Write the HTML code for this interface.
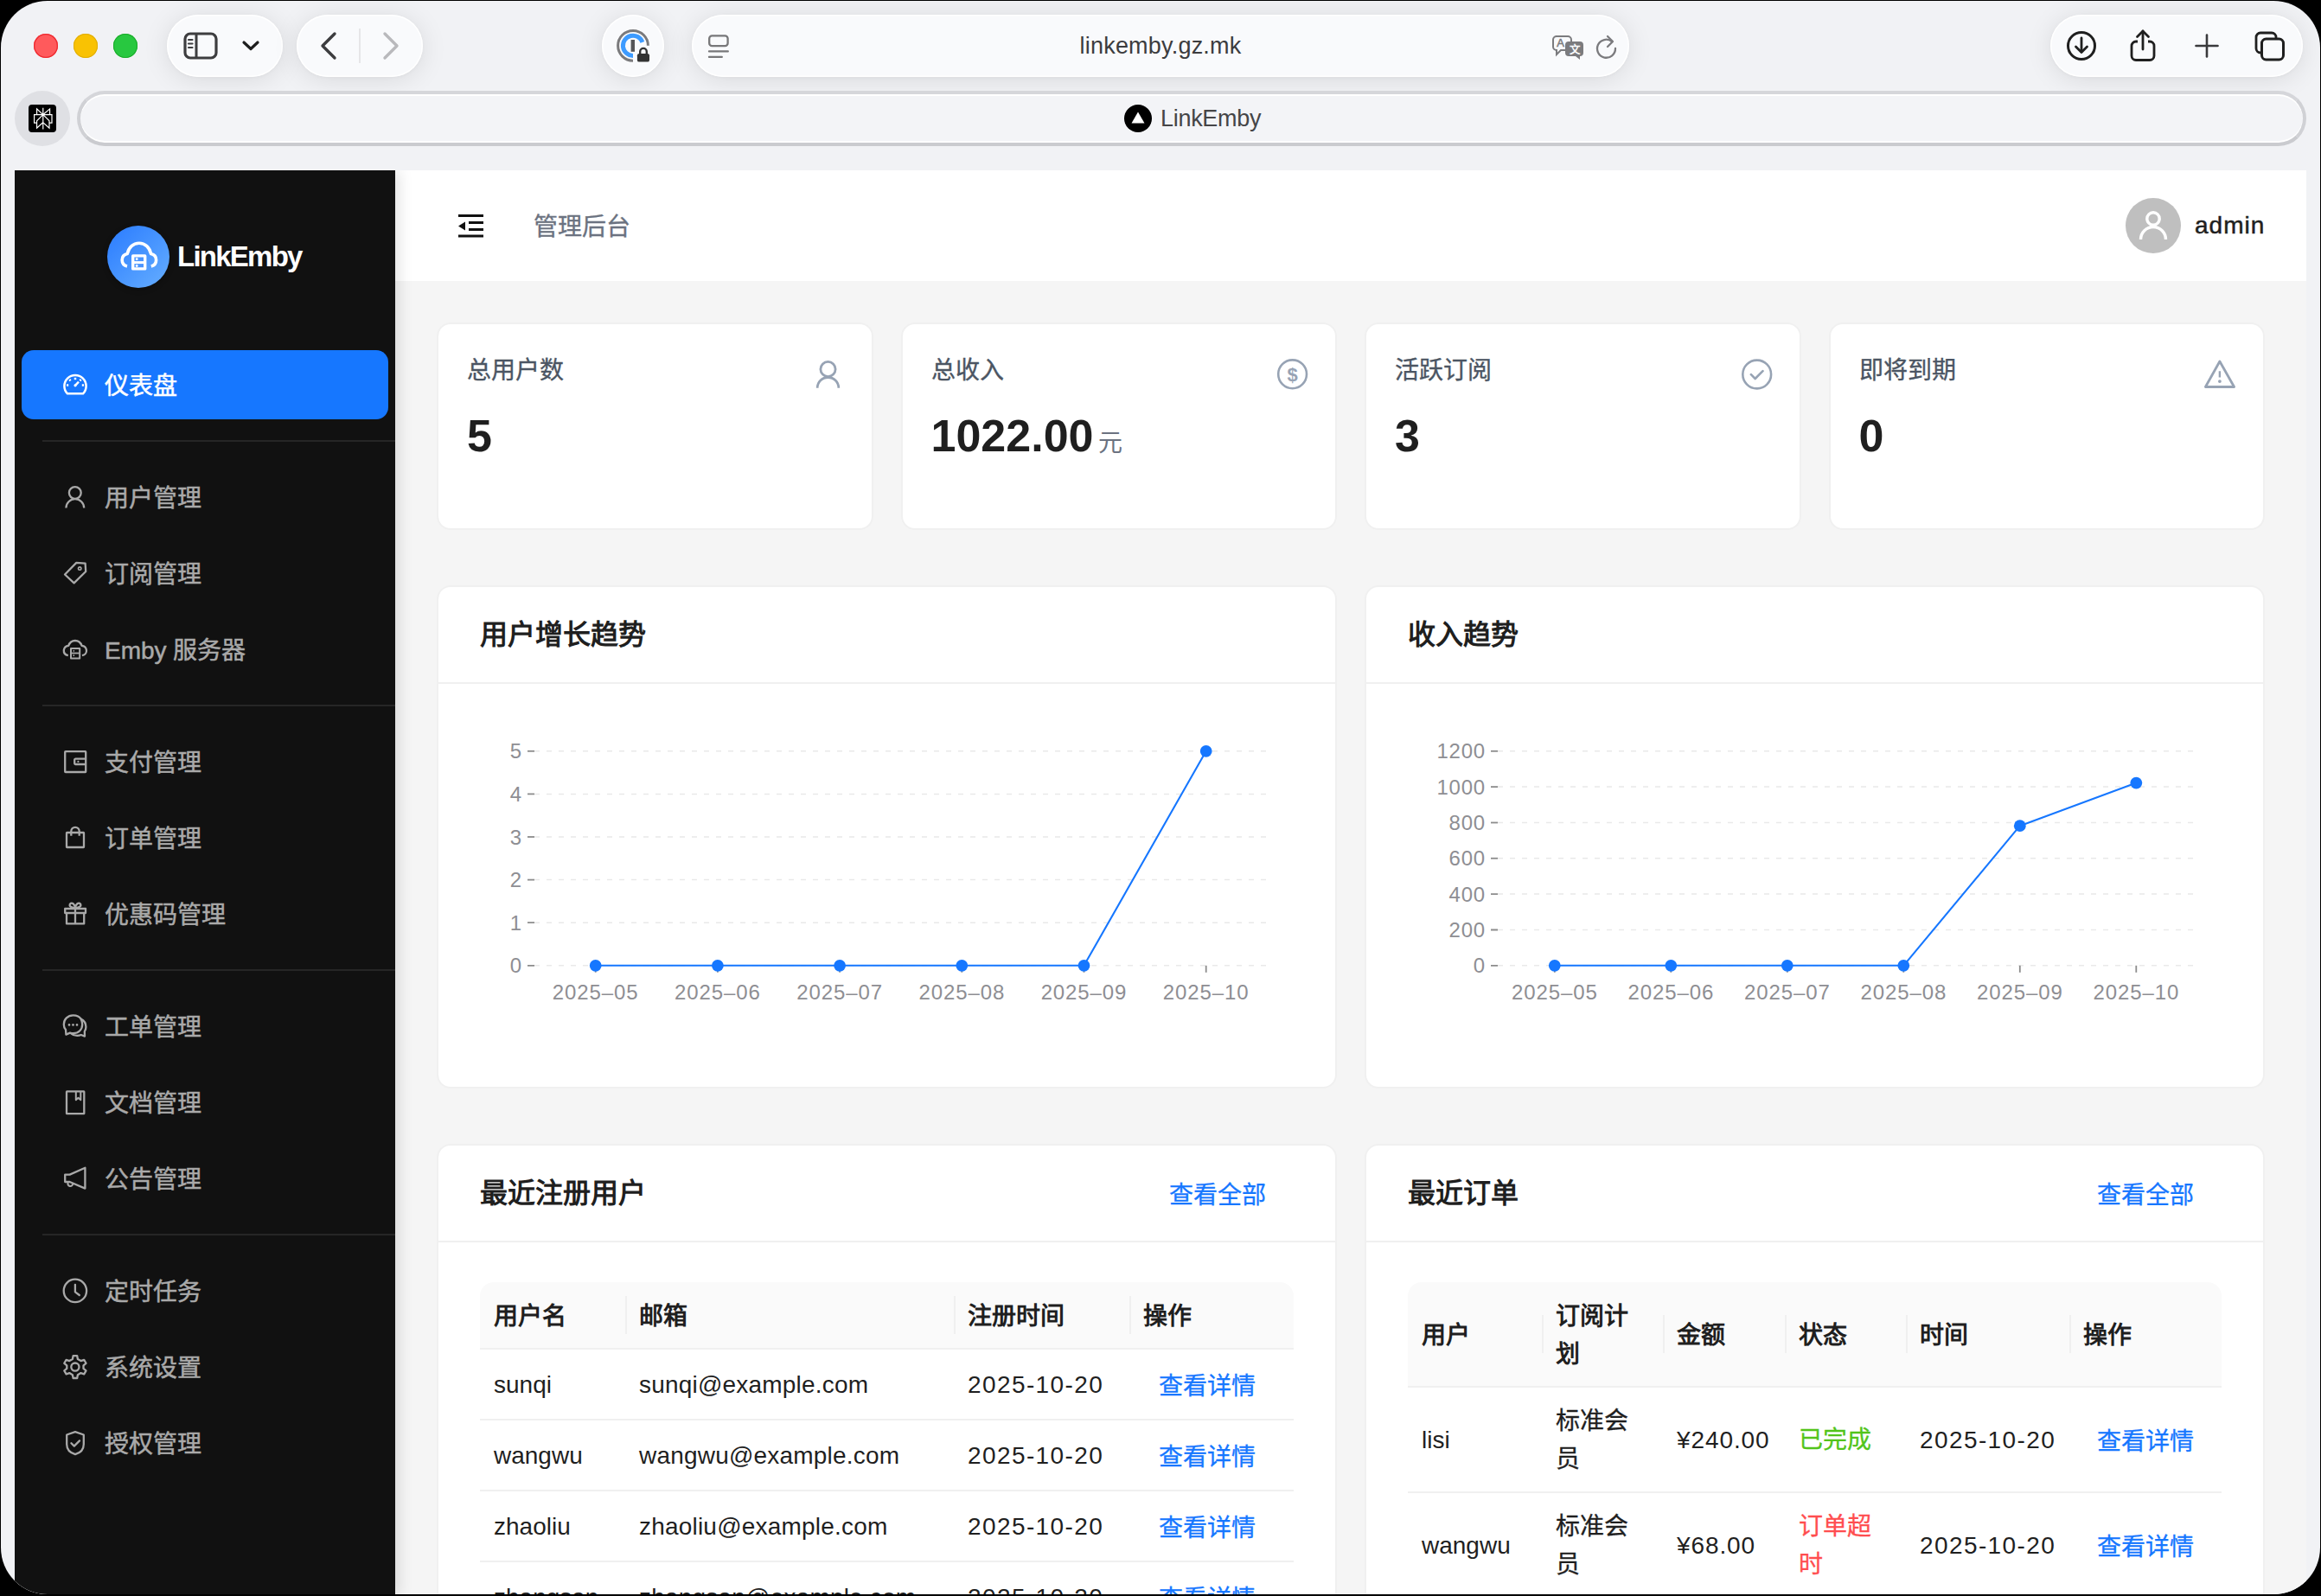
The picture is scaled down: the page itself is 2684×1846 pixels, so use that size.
<!DOCTYPE html>
<html lang="zh-CN">
<head>
<meta charset="utf-8">
<style>
*{box-sizing:border-box;margin:0;padding:0}
html,body{width:2684px;height:1846px;overflow:hidden;background:#000;font-family:"Liberation Sans",sans-serif;}
.abs{position:absolute}
#win{position:absolute;left:0;top:0;width:2684px;height:1846px;background:#f1f2f5;clip-path:inset(1px 1px 2px 1px round 54px);}
.pill{position:absolute;top:17px;height:72px;border-radius:36px;background:#f9fafc;box-shadow:0 3px 30px rgba(0,0,0,0.10),0 1px 4px rgba(0,0,0,0.03),inset 0 0 0 1.5px rgba(255,255,255,0.95);}
.tl{position:absolute;top:39px;width:28px;height:28px;border-radius:50%}
#tabbar{position:absolute;left:89px;top:105px;width:2578px;height:64px;border-radius:32px;border:4px solid #d0d1d5;border-top-color:#d5d6da;border-bottom-color:#cacbcf;background:#f3f4f7;box-shadow:inset 0 2px 0 #fff,inset 0 -2px 0 #fff;}
#web{position:absolute;left:17px;top:197px;width:2650px;height:1649px;background:#f5f5f5;overflow:hidden}
#side{position:absolute;left:0;top:0;width:440px;height:1649px;background:#111111;box-shadow:4px 0 16px rgba(0,0,0,0.12);z-index:2}
#hdr{position:absolute;left:440px;top:0;width:2210px;height:128px;background:#fff;z-index:1}
.mi{position:absolute;left:8px;width:424px;height:80px;color:#a9a9a9;font-size:28px;line-height:80px;}
.mi .ic{position:absolute;left:56px;top:26px;width:28px;height:28px}
.mi span{position:absolute;left:104px;top:0}
.mt{height:80px;line-height:84px;font-size:28px;color:#a9a9a9;white-space:nowrap;-webkit-text-stroke:0.5px currentColor}

.card{position:absolute;background:#fff;border:2px solid #f0f0f0;border-radius:16px;overflow:hidden}
.st-title{position:absolute;left:33px;top:32px;-webkit-text-stroke:0.35px currentColor;height:44px;line-height:44px;font-size:28px;color:#4b5563;white-space:nowrap}
.st-val{position:absolute;left:33px;top:97px;height:64px;line-height:64px;font-size:52px;font-weight:bold;color:#1f1f1f;white-space:nowrap}
.st-ic{position:absolute;top:38px;width:40px;height:40px}
.ch-title{position:absolute;left:48px;top:33px;height:44px;line-height:44px;font-size:32px;font-weight:bold;color:#1f1f1f;white-space:nowrap}
.ch-div{position:absolute;left:0;right:0;top:110px;height:2px;background:#f0f0f0}
.more{position:absolute;top:36px;-webkit-text-stroke:0.3px currentColor;height:44px;line-height:44px;font-size:28px;color:#1677ff;white-space:nowrap}
.tbl{position:absolute;left:48px;top:158px;width:941px}
.th{position:absolute;top:0;background:#fafafa;}
.cell{position:absolute;font-size:28px;line-height:44px;color:#1f1f1f;white-space:nowrap}
.hd{font-weight:bold}
.sep{position:absolute;width:2px;height:44px;background:#f0f0f0}
.rowb{position:absolute;left:0;width:941px;height:2px;background:#f0f0f0}
.link{color:#1677ff;-webkit-text-stroke:0.3px currentColor}
.num{letter-spacing:1.4px}
.num2{letter-spacing:0.9px}
.lat{letter-spacing:0.2px}
.div{position:absolute;left:32px;width:408px;height:2px;background:#262626}
</style>
</head>
<body>
<div id="win">
  <!-- traffic lights -->
  <div class="tl" style="left:39px;background:#ff5a5c;box-shadow:inset 0 0 0 1.3px #ee2a30"></div>
  <div class="tl" style="left:85px;background:#f9c203;box-shadow:inset 0 0 0 1px #e0ad00"></div>
  <div class="tl" style="left:131px;background:#28c840;box-shadow:inset 0 0 0 1px #1aab29"></div>
  <!-- pill 1 -->
  <div class="pill" style="left:193px;width:134px">
    <svg class="abs" style="left:18px;top:19px" width="42" height="34" viewBox="0 0 42 34">
      <rect x="3" y="3" width="36" height="28" rx="6" fill="none" stroke="#3d3d3f" stroke-width="3.2"/>
      <line x1="16" y1="4" x2="16" y2="30" stroke="#3d3d3f" stroke-width="3"/>
      <line x1="7" y1="10" x2="11.5" y2="10" stroke="#3d3d3f" stroke-width="2.2" stroke-linecap="round"/>
      <line x1="7" y1="14.5" x2="11.5" y2="14.5" stroke="#3d3d3f" stroke-width="2.2" stroke-linecap="round"/>
      <line x1="7" y1="19" x2="11.5" y2="19" stroke="#3d3d3f" stroke-width="2.2" stroke-linecap="round"/>
    </svg>
    <svg class="abs" style="left:86px;top:29px" width="22" height="14" viewBox="0 0 22 14">
      <polyline points="3,3 11,10.5 19,3" fill="none" stroke="#1e1e1e" stroke-width="3.2" stroke-linecap="round" stroke-linejoin="round"/>
    </svg>
  </div>
  <!-- pill 2 -->
  <div class="pill" style="left:343px;width:146px">
    <svg class="abs" style="left:25px;top:19px" width="24" height="34" viewBox="0 0 24 34">
      <polyline points="19,3 5,17 19,31" fill="none" stroke="#3d3d3f" stroke-width="3.4" stroke-linecap="round" stroke-linejoin="round"/>
    </svg>
    <div class="abs" style="left:72px;top:16px;width:2px;height:40px;background:#e6e6e8"></div>
    <svg class="abs" style="left:97px;top:19px" width="24" height="34" viewBox="0 0 24 34">
      <polyline points="5,3 19,17 5,31" fill="none" stroke="#b9b9bc" stroke-width="3.4" stroke-linecap="round" stroke-linejoin="round"/>
    </svg>
  </div>
  <!-- 1password -->
  <div class="pill" style="left:696px;width:72px">
    <svg class="abs" style="left:0;top:0" width="72" height="72" viewBox="0 0 72 72">
      <path d="M36 53.2 A17.4 17.4 0 1 1 53.4 35.8" fill="none" stroke="#7a7a7c" stroke-width="3"/>
      <path d="M36 47.4 A11.6 11.6 0 1 1 46.9 31.8" fill="none" stroke="#3d9bff" stroke-width="5"/>
      <rect x="33.6" y="29" width="4.4" height="13.8" fill="#555557"/>
      <path d="M37.5 45 H58 V58 H37.5 Z" fill="#f9fafc"/>
      <rect x="40.9" y="45" width="14.1" height="9.6" rx="2.2" fill="#333"/>
      <path d="M44.2 45.5 v-2.8 a3.8 3.8 0 0 1 7.6 0 v2.8" fill="none" stroke="#333" stroke-width="2.4"/>
    </svg>
  </div>
  <!-- address -->
  <div class="pill" style="left:800px;width:1084px">
    <svg class="abs" style="left:18px;top:22px" width="26" height="30" viewBox="0 0 26 30">
      <rect x="2.2" y="2.4" width="21.4" height="11.8" rx="3.2" fill="none" stroke="#777779" stroke-width="2.3"/>
      <line x1="2" y1="20.4" x2="23.8" y2="20.4" stroke="#777779" stroke-width="2.3" stroke-linecap="round"/>
      <line x1="2" y1="26.9" x2="16.8" y2="26.9" stroke="#777779" stroke-width="2.3" stroke-linecap="round"/>
    </svg>
    <div class="abs" style="left:0;width:1084px;top:0;height:72px;line-height:72px;text-align:center;font-size:27px;color:#3c3c3e;letter-spacing:0.2px">linkemby.gz.mk</div>
    <svg class="abs" style="left:994px;top:23px" width="40" height="30" viewBox="0 0 40 30">
      <path d="M5 2 h14 a4 4 0 0 1 4 4 v8 a4 4 0 0 1 -4 4 h-8 l-5 5 v-5 a4 4 0 0 1 -4 -4 v-8 a4 4 0 0 1 4 -4z" fill="none" stroke="#7b7b7e" stroke-width="2"/>
      <text x="6.2" y="14.2" font-size="13" fill="#7b7b7e" font-family="Liberation Sans" stroke="#7b7b7e" stroke-width="0.5">A</text>
      <path d="M20 8 h13 a4 4 0 0 1 4 4 v9 a4 4 0 0 1 -4 4 l0 4 l-5 -4 h-8 a4 4 0 0 1 -4 -4 v-9 a4 4 0 0 1 4 -4z" fill="#7b7b7e"/>
      <text x="27.5" y="21.8" text-anchor="middle" font-size="12.5" font-weight="bold" fill="#f9fafc">文</text>
    </svg>
    <svg class="abs" style="left:1044px;top:22px" width="28" height="30" viewBox="0 0 28 30">
      <path d="M20 9 A10.5 10.5 0 1 0 24 17" fill="none" stroke="#7b7b7e" stroke-width="2.3" stroke-linecap="round"/>
      <polyline points="15,3 21,9 15,15" fill="none" stroke="#7b7b7e" stroke-width="2.3" stroke-linecap="round" stroke-linejoin="round"/>
    </svg>
  </div>
  <!-- right pill -->
  <div class="pill" style="left:2371px;width:292px">
    <svg class="abs" style="left:17px;top:17px" width="38" height="38" viewBox="0 0 38 38">
      <circle cx="19" cy="19" r="15.5" fill="none" stroke="#1f1f1f" stroke-width="3"/>
      <line x1="19" y1="10" x2="19" y2="26" stroke="#1f1f1f" stroke-width="2.8" stroke-linecap="round"/>
      <polyline points="12.5,20 19,26.5 25.5,20" fill="none" stroke="#1f1f1f" stroke-width="2.8" stroke-linecap="round" stroke-linejoin="round"/>
    </svg>
    <svg class="abs" style="left:90px;top:16px" width="34" height="40" viewBox="0 0 34 40">
      <path d="M11 15 h-2 a5 5 0 0 0 -5 5 v11.5 a5 5 0 0 0 5 5 h16 a5 5 0 0 0 5 -5 v-11.5 a5 5 0 0 0 -5 -5 h-2" fill="none" stroke="#1f1f1f" stroke-width="2.8"/>
      <line x1="17" y1="3" x2="17" y2="24" stroke="#1f1f1f" stroke-width="2.8" stroke-linecap="round"/>
      <polyline points="10.5,9.5 17,3 23.5,9.5" fill="none" stroke="#1f1f1f" stroke-width="2.8" stroke-linecap="round" stroke-linejoin="round"/>
    </svg>
    <svg class="abs" style="left:165px;top:20px" width="32" height="32" viewBox="0 0 32 32">
      <line x1="16" y1="3.5" x2="16" y2="28.5" stroke="#3a3a3c" stroke-width="2.6" stroke-linecap="round"/>
      <line x1="3.5" y1="16" x2="28.5" y2="16" stroke="#3a3a3c" stroke-width="2.6" stroke-linecap="round"/>
    </svg>
    <svg class="abs" style="left:234px;top:17px" width="40" height="38" viewBox="0 0 40 38">
      <path d="M10 27 h-1 a5 5 0 0 1 -5 -5 v-13 a5 5 0 0 1 5 -5 h13 a5 5 0 0 1 5 5 v1" fill="none" stroke="#1f1f1f" stroke-width="2.8"/>
      <rect x="10.5" y="11" width="25" height="24" rx="5" fill="none" stroke="#1f1f1f" stroke-width="3"/>
    </svg>
  </div>
  <!-- tab row -->
  <div class="abs" style="left:17px;top:105px;width:64px;height:64px;border-radius:50%;background:#dfe0e4"></div>
  <svg class="abs" style="left:33px;top:121px" width="32" height="32" viewBox="0 0 32 32">
    <rect x="0" y="0" width="32" height="32" rx="4" fill="#000"/>
    <path transform="translate(4.3,3.6) scale(1.04)" fill="#fff" d="M22.3977 7.0896h-2.3106V.0676l-7.5094 6.3542V.1577h-1.1554v6.1966L4.4904 0v7.0896H1.6023v10.3976h2.8882V24l6.932-6.3591v6.2005h1.1554v-6.0469l6.9318 6.1807v-6.4879h2.8882V7.0896zm-3.4657-4.531v4.531h-5.355l5.355-4.531zm-13.2862.0676 4.8691 4.4634H5.6458V2.6262zM2.7576 16.332V8.245h7.8476l-6.1149 6.1147v1.9723H2.7576zm2.8882 5.0404v-3.8852h.0001v-2.6488l5.7763-5.7764v7.0111l-5.7764 5.2993zm12.7086.0248-5.7766-5.1509V9.0618l5.7766 5.7766v6.5588zm2.8882-5.0652h-1.733v-1.9723L13.3948 8.245h7.8478v8.087z"/>
  </svg>
  <div id="tabbar">
    <div class="abs" style="left:1207px;top:12px;width:32px;height:32px;border-radius:50%;background:#000"></div>
    <svg class="abs" style="left:1207px;top:12px" width="32" height="32" viewBox="0 0 32 32"><polygon points="16,8.5 23.5,21.5 8.5,21.5" fill="#fff"/></svg>
    <div class="abs" style="left:1249px;top:-1px;height:58px;line-height:58px;font-size:27px;color:#454547;letter-spacing:-0.3px">LinkEmby</div>
  </div>

  <div id="web">
    <div id="side">
      <div class="abs" style="left:107px;top:64px;width:72px;height:72px;border-radius:50%;background:linear-gradient(135deg,#2a7bff 0%,#4a97ff 55%,#66aeff 100%);box-shadow:0 2px 6px rgba(0,0,0,0.3)"></div>
      <svg class="abs" style="left:107px;top:64px" width="72" height="72" viewBox="0 0 72 72" fill="none" stroke="#fff" stroke-width="3.6" stroke-linejoin="round">
        <path d="M23 47 C19 46 17.2 43 17.2 39.8 C17.2 36 19.8 33.4 23.2 32.6 C24.8 25.2 30 20.2 36.9 20.2 C43.8 20.2 49 25.2 50.6 32.6 C54 33.4 56.6 36 56.6 39.8 C56.6 43 54.8 46 50.8 47"/>
        <rect x="29.7" y="34.9" width="14" height="15" stroke-width="3.4" fill="#4a95ff"/>
        <line x1="29.7" y1="42.6" x2="43.7" y2="42.6" stroke-width="3"/>
        <circle cx="34.2" cy="38.7" r="1.4" fill="#fff" stroke="none"/><circle cx="34.2" cy="46.5" r="1.4" fill="#fff" stroke="none"/>
      </svg>
      <div class="abs" style="left:188px;top:70px;height:60px;line-height:60px;font-size:33px;font-weight:bold;color:#fff;letter-spacing:-1.75px">LinkEmby</div>
      <div class="abs" style="left:8px;top:208px;width:424px;height:80px;border-radius:14px;background:#1677ff"></div>
      <div class="abs" style="left:49px;top:227px"><svg width="40" height="40" viewBox="0 0 40 40" fill="none" stroke="#fff" stroke-width="2.5" stroke-linejoin="round"><path d="M12 31.3 A12.6 12.6 0 1 1 30 31.3 Z"/><line x1="21" y1="12.8" x2="21" y2="15.2"/><line x1="14.3" y1="15" x2="15.6" y2="16.3"/><line x1="27.7" y1="15" x2="26.4" y2="16.3"/><line x1="11" y1="21.5" x2="13.2" y2="21.5"/><line x1="28.8" y1="21.5" x2="31" y2="21.5"/><line x1="21" y1="21.8" x2="25" y2="17.6"/><circle cx="21" cy="21.8" r="1.6" fill="#fff" stroke="none"/></svg></div>
      <div class="abs mt" style="left:104px;top:208px;color:#fff">仪表盘</div>
      <div class="abs" style="left:49px;top:358px"><svg width="40" height="40" viewBox="0 0 40 40" fill="none" stroke="#a9a9a9" stroke-width="2.3" stroke-linejoin="round"><circle cx="20.8" cy="15" r="6.9"/><path d="M10.4 32.6 A10.4 10.4 0 0 1 31.2 32.6"/></svg></div>
      <div class="abs mt" style="left:104px;top:338px">用户管理</div>
      <div class="abs" style="left:49px;top:446px"><svg width="40" height="40" viewBox="0 0 40 40" fill="none" stroke="#a9a9a9" stroke-width="2.3" stroke-linejoin="round"><path d="M9 21.5 L22.3 7.9 L32.6 8.6 L33.2 18 L19.6 31.4 Z"/><circle cx="26.2" cy="14.6" r="1.7" stroke-width="1.6"/></svg></div>
      <div class="abs mt" style="left:104px;top:426px">订阅管理</div>
      <div class="abs" style="left:49px;top:534px"><svg width="40" height="40" viewBox="0 0 40 40" fill="none" stroke="#a9a9a9" stroke-width="2.3" stroke-linejoin="round"><path d="M12.8 27.2 C9.2 26.4 7.6 23.6 7.8 21 C8.2 18.1 10.4 16.2 13.2 15.9 C14.6 11.9 17.5 10 20.9 10 C24.3 10 27.2 11.9 28.6 15.9 C31.4 16.2 33.6 18.1 34 21 C34.3 23.6 32.6 26.4 29 27.2"/><rect x="16" y="19" width="10.2" height="11.5" stroke-width="2"/><line x1="16" y1="24.5" x2="26.2" y2="24.5" stroke-width="1.8"/><circle cx="19.3" cy="21.8" r="0.9" fill="#a9a9a9" stroke="none"/><circle cx="19.3" cy="27.2" r="0.9" fill="#a9a9a9" stroke="none"/></svg></div>
      <div class="abs mt" style="left:104px;top:514px">Emby 服务器</div>
      <div class="abs" style="left:49px;top:664px"><svg width="40" height="40" viewBox="0 0 40 40" fill="none" stroke="#a9a9a9" stroke-width="2.3" stroke-linejoin="round"><rect x="9.2" y="8.2" width="24" height="23.8" rx="0.6"/><path d="M33 16.6 H21.4 A1.2 1.2 0 0 0 20.2 17.8 V21.8 A1.2 1.2 0 0 0 21.4 23 H33"/><circle cx="24.4" cy="19.9" r="1.1" fill="#a9a9a9" stroke="none"/></svg></div>
      <div class="abs mt" style="left:104px;top:644px">支付管理</div>
      <div class="abs" style="left:49px;top:752px"><svg width="40" height="40" viewBox="0 0 40 40" fill="none" stroke="#a9a9a9" stroke-width="2.3" stroke-linejoin="round"><rect x="11" y="14" width="20" height="17" rx="0.4"/><path d="M16.3 17.8 V12.5 A4.7 4.7 0 0 1 25.7 12.5 V17.8"/></svg></div>
      <div class="abs mt" style="left:104px;top:732px">订单管理</div>
      <div class="abs" style="left:49px;top:840px"><svg width="40" height="40" viewBox="0 0 40 40" fill="none" stroke="#a9a9a9" stroke-width="2.3" stroke-linejoin="round"><rect x="9.2" y="14" width="23.8" height="5" /><path d="M11 19 V31.4 H31.2 V19"/><line x1="21" y1="13.5" x2="21" y2="31.4"/><path d="M21 13.5 C19.5 13 15 12.8 14.6 10.3 C14.3 8 16.8 6.9 18.6 8.2 C20 9.2 20.8 11 21 13.5 C21.2 11 22 9.2 23.4 8.2 C25.2 6.9 27.7 8 27.4 10.3 C27 12.8 22.5 13 21 13.5"/></svg></div>
      <div class="abs mt" style="left:104px;top:820px">优惠码管理</div>
      <div class="abs" style="left:49px;top:970px"><svg width="40" height="40" viewBox="0 0 40 40" fill="none" stroke="#a9a9a9" stroke-width="2.3" stroke-linejoin="round"><path d="M27.6 11.6 C25.8 8.6 22.6 7.4 18.6 7.4 C12.3 7.4 7.8 11.9 7.8 18 C7.8 20.4 8.6 22.4 10 24 L10.4 29.6 L15 27.6 C16.1 28 17.3 28.2 18.6 28.2 C24.9 28.2 29.2 23.7 29.2 18 C29.2 15.6 28.6 13.4 27.6 11.6"/><path d="M27.6 11.6 C31.2 13.4 33.4 16.9 33.4 20.7 C33.4 22.6 32.8 24.4 31.8 26 L32 31.6 L27.8 30 C26.4 30.6 24.9 30.9 23.2 30.9 C20.4 30.9 18 29.9 16.2 28.3" /><circle cx="14" cy="18.4" r="1.3" fill="#a9a9a9" stroke="none"/><circle cx="18.5" cy="18.4" r="1.3" fill="#a9a9a9" stroke="none"/><circle cx="23" cy="18.4" r="1.3" fill="#a9a9a9" stroke="none"/></svg></div>
      <div class="abs mt" style="left:104px;top:950px">工单管理</div>
      <div class="abs" style="left:49px;top:1058px"><svg width="40" height="40" viewBox="0 0 40 40" fill="none" stroke="#a9a9a9" stroke-width="2.3" stroke-linejoin="round"><rect x="11" y="7.3" width="20.3" height="25.8" rx="0.4"/><path d="M21.8 7.5 V17.3 L24.5 14.8 L27.3 17.3 V7.5" stroke-width="2"/></svg></div>
      <div class="abs mt" style="left:104px;top:1038px">文档管理</div>
      <div class="abs" style="left:49px;top:1146px"><svg width="40" height="40" viewBox="0 0 40 40" fill="none" stroke="#a9a9a9" stroke-width="2.3" stroke-linejoin="round"><path d="M9.2 15.6 H14.6 L32.4 7.8 V31.6 L14.6 24 H9.2 Z"/><path d="M12.8 24.6 A2.9 2.9 0 1 0 18.2 25.8" stroke-width="2.1"/></svg></div>
      <div class="abs mt" style="left:104px;top:1126px">公告管理</div>
      <div class="abs" style="left:49px;top:1276px"><svg width="40" height="40" viewBox="0 0 40 40" fill="none" stroke="#a9a9a9" stroke-width="2.3" stroke-linejoin="round"><circle cx="20.9" cy="19.9" r="13.2"/><path d="M20.9 12.8 V21.3 L25.8 25" stroke-linecap="round"/></svg></div>
      <div class="abs mt" style="left:104px;top:1256px">定时任务</div>
      <div class="abs" style="left:49px;top:1364px"><svg width="40" height="40" viewBox="0 0 40 40" fill="none" stroke="#a9a9a9" stroke-width="2.3" stroke-linejoin="round"><path d="M18.6 7.2 H23.2 L23.9 11 L27.5 13.1 L31.2 11.8 L33.5 15.8 L30.5 18.3 V21.9 L33.5 24.4 L31.2 28.4 L27.5 27.1 L23.9 29.2 L23.2 33 H18.6 L17.9 29.2 L14.3 27.1 L10.6 28.4 L8.3 24.4 L11.3 21.9 V18.3 L8.3 15.8 L10.6 11.8 L14.3 13.1 L17.9 11 Z"/><circle cx="20.9" cy="20.1" r="4.6"/></svg></div>
      <div class="abs mt" style="left:104px;top:1344px">系统设置</div>
      <div class="abs" style="left:49px;top:1452px"><svg width="40" height="40" viewBox="0 0 40 40" fill="none" stroke="#a9a9a9" stroke-width="2.3" stroke-linejoin="round"><path d="M11.2 10.5 L21 7.2 L30.8 10.5 V21.5 C30.8 27.5 26.4 31.6 21 33.2 C15.6 31.6 11.2 27.5 11.2 21.5 Z"/><path d="M16.4 20.2 L19.8 23.6 L26 17.4" stroke-linecap="round"/></svg></div>
      <div class="abs mt" style="left:104px;top:1432px">授权管理</div>
      <div class="div" style="top:312px"></div>
      <div class="div" style="top:618px"></div>
      <div class="div" style="top:924px"></div>
      <div class="div" style="top:1230px"></div>
    </div>
    <div class="card" style="left:488px;top:176px;width:504.5px;height:240px"><div class="st-title">总用户数</div><div class="st-val">5</div><div class="st-ic" style="right:30px"><svg width="40" height="40" viewBox="0 0 40 40" fill="none" stroke="#97a3b4" stroke-width="2.8"><circle cx="19.5" cy="14" r="8.6"/><path d="M7.2 35.8 A12.3 12.3 0 0 1 31.8 35.8"/></svg></div></div>
    <div class="card" style="left:1024.5px;top:176px;width:504.5px;height:240px"><div class="st-title">总收入</div><div class="st-val">1022.00<span style="font-size:28px;font-weight:normal;color:#6b7280;margin-left:6px">元</span></div><div class="st-ic" style="right:30px"><svg width="40" height="40" viewBox="0 0 40 40" fill="none" stroke="#97a3b4" stroke-width="2.6"><circle cx="20.6" cy="19.8" r="16.4"/><text x="20.6" y="27.8" font-weight="bold" text-anchor="middle" font-size="22" font-family="Liberation Sans" fill="#97a3b4" stroke="none">$</text></svg></div></div>
    <div class="card" style="left:1561px;top:176px;width:504.5px;height:240px"><div class="st-title">活跃订阅</div><div class="st-val">3</div><div class="st-ic" style="right:30px"><svg width="40" height="40" viewBox="0 0 40 40" fill="none" stroke="#97a3b4" stroke-width="2.6"><circle cx="20.7" cy="20" r="16.4"/><path d="M13.9 20.2 L18.7 25 L27.5 16.2" stroke-linecap="round" stroke-linejoin="round"/></svg></div></div>
    <div class="card" style="left:2097.5px;top:176px;width:504.5px;height:240px"><div class="st-title">即将到期</div><div class="st-val">0</div><div class="st-ic" style="right:30px"><svg width="40" height="40" viewBox="0 0 40 40" fill="none" stroke="#97a3b4" stroke-width="2.6"><path d="M19.9 5 L36.6 34.5 H3.4 Z" stroke-linejoin="round" stroke-width="2.8"/><line x1="19.9" y1="16.2" x2="19.9" y2="23.4" stroke-width="2.4"/><circle cx="19.9" cy="28.1" r="1.9" fill="#97a3b4" stroke="none"/></svg></div></div>
    <div class="card" style="left:488px;top:480px;width:1041px;height:582px"><div class="ch-title">用户增长趋势</div><div class="ch-div"></div><svg class="abs" style="left:-2px;top:-2px" width="1041" height="582"><line x1="113" y1="439.8" x2="960" y2="439.8" stroke="#e9e9e9" stroke-width="1.5" stroke-dasharray="6 8"/><line x1="105" y1="439.8" x2="113" y2="439.8" stroke="#8c8c8c" stroke-width="1.8"/><text x="99" y="448.3" text-anchor="end" font-size="24" fill="#8e8e93" font-family="Liberation Sans" letter-spacing="0.8">0</text><line x1="113" y1="390.2" x2="960" y2="390.2" stroke="#e9e9e9" stroke-width="1.5" stroke-dasharray="6 8"/><line x1="105" y1="390.2" x2="113" y2="390.2" stroke="#8c8c8c" stroke-width="1.8"/><text x="99" y="398.7" text-anchor="end" font-size="24" fill="#8e8e93" font-family="Liberation Sans" letter-spacing="0.8">1</text><line x1="113" y1="340.6" x2="960" y2="340.6" stroke="#e9e9e9" stroke-width="1.5" stroke-dasharray="6 8"/><line x1="105" y1="340.6" x2="113" y2="340.6" stroke="#8c8c8c" stroke-width="1.8"/><text x="99" y="349.1" text-anchor="end" font-size="24" fill="#8e8e93" font-family="Liberation Sans" letter-spacing="0.8">2</text><line x1="113" y1="291.0" x2="960" y2="291.0" stroke="#e9e9e9" stroke-width="1.5" stroke-dasharray="6 8"/><line x1="105" y1="291.0" x2="113" y2="291.0" stroke="#8c8c8c" stroke-width="1.8"/><text x="99" y="299.5" text-anchor="end" font-size="24" fill="#8e8e93" font-family="Liberation Sans" letter-spacing="0.8">3</text><line x1="113" y1="241.4" x2="960" y2="241.4" stroke="#e9e9e9" stroke-width="1.5" stroke-dasharray="6 8"/><line x1="105" y1="241.4" x2="113" y2="241.4" stroke="#8c8c8c" stroke-width="1.8"/><text x="99" y="249.9" text-anchor="end" font-size="24" fill="#8e8e93" font-family="Liberation Sans" letter-spacing="0.8">4</text><line x1="113" y1="191.8" x2="960" y2="191.8" stroke="#e9e9e9" stroke-width="1.5" stroke-dasharray="6 8"/><line x1="105" y1="191.8" x2="113" y2="191.8" stroke="#8c8c8c" stroke-width="1.8"/><text x="99" y="200.3" text-anchor="end" font-size="24" fill="#8e8e93" font-family="Liberation Sans" letter-spacing="0.8">5</text><line x1="183.7" y1="439.8" x2="183.7" y2="447.8" stroke="#8c8c8c" stroke-width="1.8"/><text x="183.7" y="479" text-anchor="middle" font-size="24" fill="#8e8e93" font-family="Liberation Sans" letter-spacing="0.9">2025–05</text><line x1="324.9" y1="439.8" x2="324.9" y2="447.8" stroke="#8c8c8c" stroke-width="1.8"/><text x="324.9" y="479" text-anchor="middle" font-size="24" fill="#8e8e93" font-family="Liberation Sans" letter-spacing="0.9">2025–06</text><line x1="466.1" y1="439.8" x2="466.1" y2="447.8" stroke="#8c8c8c" stroke-width="1.8"/><text x="466.1" y="479" text-anchor="middle" font-size="24" fill="#8e8e93" font-family="Liberation Sans" letter-spacing="0.9">2025–07</text><line x1="607.3" y1="439.8" x2="607.3" y2="447.8" stroke="#8c8c8c" stroke-width="1.8"/><text x="607.3" y="479" text-anchor="middle" font-size="24" fill="#8e8e93" font-family="Liberation Sans" letter-spacing="0.9">2025–08</text><line x1="748.5" y1="439.8" x2="748.5" y2="447.8" stroke="#8c8c8c" stroke-width="1.8"/><text x="748.5" y="479" text-anchor="middle" font-size="24" fill="#8e8e93" font-family="Liberation Sans" letter-spacing="0.9">2025–09</text><line x1="889.7" y1="439.8" x2="889.7" y2="447.8" stroke="#8c8c8c" stroke-width="1.8"/><text x="889.7" y="479" text-anchor="middle" font-size="24" fill="#8e8e93" font-family="Liberation Sans" letter-spacing="0.9">2025–10</text><polyline points="183.7,439.8 324.9,439.8 466.1,439.8 607.3,439.8 748.5,439.8 889.7,191.8" fill="none" stroke="#1677ff" stroke-width="2.1" stroke-linejoin="round"/><circle cx="183.7" cy="439.8" r="6.9" fill="#1677ff"/><circle cx="324.9" cy="439.8" r="6.9" fill="#1677ff"/><circle cx="466.1" cy="439.8" r="6.9" fill="#1677ff"/><circle cx="607.3" cy="439.8" r="6.9" fill="#1677ff"/><circle cx="748.5" cy="439.8" r="6.9" fill="#1677ff"/><circle cx="889.7" cy="191.8" r="6.9" fill="#1677ff"/></svg></div>
    <div class="card" style="left:1561px;top:480px;width:1041px;height:582px"><div class="ch-title">收入趋势</div><div class="ch-div"></div><svg class="abs" style="left:-2px;top:-2px" width="1041" height="582"><line x1="154" y1="439.8" x2="958" y2="439.8" stroke="#e9e9e9" stroke-width="1.5" stroke-dasharray="6 8"/><line x1="146" y1="439.8" x2="154" y2="439.8" stroke="#8c8c8c" stroke-width="1.8"/><text x="140" y="448.3" text-anchor="end" font-size="24" fill="#8e8e93" font-family="Liberation Sans" letter-spacing="0.8">0</text><line x1="154" y1="398.5" x2="958" y2="398.5" stroke="#e9e9e9" stroke-width="1.5" stroke-dasharray="6 8"/><line x1="146" y1="398.5" x2="154" y2="398.5" stroke="#8c8c8c" stroke-width="1.8"/><text x="140" y="407.0" text-anchor="end" font-size="24" fill="#8e8e93" font-family="Liberation Sans" letter-spacing="0.8">200</text><line x1="154" y1="357.1" x2="958" y2="357.1" stroke="#e9e9e9" stroke-width="1.5" stroke-dasharray="6 8"/><line x1="146" y1="357.1" x2="154" y2="357.1" stroke="#8c8c8c" stroke-width="1.8"/><text x="140" y="365.6" text-anchor="end" font-size="24" fill="#8e8e93" font-family="Liberation Sans" letter-spacing="0.8">400</text><line x1="154" y1="315.8" x2="958" y2="315.8" stroke="#e9e9e9" stroke-width="1.5" stroke-dasharray="6 8"/><line x1="146" y1="315.8" x2="154" y2="315.8" stroke="#8c8c8c" stroke-width="1.8"/><text x="140" y="324.3" text-anchor="end" font-size="24" fill="#8e8e93" font-family="Liberation Sans" letter-spacing="0.8">600</text><line x1="154" y1="274.5" x2="958" y2="274.5" stroke="#e9e9e9" stroke-width="1.5" stroke-dasharray="6 8"/><line x1="146" y1="274.5" x2="154" y2="274.5" stroke="#8c8c8c" stroke-width="1.8"/><text x="140" y="283.0" text-anchor="end" font-size="24" fill="#8e8e93" font-family="Liberation Sans" letter-spacing="0.8">800</text><line x1="154" y1="233.1" x2="958" y2="233.1" stroke="#e9e9e9" stroke-width="1.5" stroke-dasharray="6 8"/><line x1="146" y1="233.1" x2="154" y2="233.1" stroke="#8c8c8c" stroke-width="1.8"/><text x="140" y="241.6" text-anchor="end" font-size="24" fill="#8e8e93" font-family="Liberation Sans" letter-spacing="0.8">1000</text><line x1="154" y1="191.8" x2="958" y2="191.8" stroke="#e9e9e9" stroke-width="1.5" stroke-dasharray="6 8"/><line x1="146" y1="191.8" x2="154" y2="191.8" stroke="#8c8c8c" stroke-width="1.8"/><text x="140" y="200.3" text-anchor="end" font-size="24" fill="#8e8e93" font-family="Liberation Sans" letter-spacing="0.8">1200</text><line x1="219.8" y1="439.8" x2="219.8" y2="447.8" stroke="#8c8c8c" stroke-width="1.8"/><text x="219.8" y="479" text-anchor="middle" font-size="24" fill="#8e8e93" font-family="Liberation Sans" letter-spacing="0.9">2025–05</text><line x1="354.3" y1="439.8" x2="354.3" y2="447.8" stroke="#8c8c8c" stroke-width="1.8"/><text x="354.3" y="479" text-anchor="middle" font-size="24" fill="#8e8e93" font-family="Liberation Sans" letter-spacing="0.9">2025–06</text><line x1="488.8" y1="439.8" x2="488.8" y2="447.8" stroke="#8c8c8c" stroke-width="1.8"/><text x="488.8" y="479" text-anchor="middle" font-size="24" fill="#8e8e93" font-family="Liberation Sans" letter-spacing="0.9">2025–07</text><line x1="623.3" y1="439.8" x2="623.3" y2="447.8" stroke="#8c8c8c" stroke-width="1.8"/><text x="623.3" y="479" text-anchor="middle" font-size="24" fill="#8e8e93" font-family="Liberation Sans" letter-spacing="0.9">2025–08</text><line x1="757.8" y1="439.8" x2="757.8" y2="447.8" stroke="#8c8c8c" stroke-width="1.8"/><text x="757.8" y="479" text-anchor="middle" font-size="24" fill="#8e8e93" font-family="Liberation Sans" letter-spacing="0.9">2025–09</text><line x1="892.3" y1="439.8" x2="892.3" y2="447.8" stroke="#8c8c8c" stroke-width="1.8"/><text x="892.3" y="479" text-anchor="middle" font-size="24" fill="#8e8e93" font-family="Liberation Sans" letter-spacing="0.9">2025–10</text><polyline points="219.8,439.8 354.3,439.8 488.8,439.8 623.3,439.8 757.8,278.2 892.3,228.6" fill="none" stroke="#1677ff" stroke-width="2.1" stroke-linejoin="round"/><circle cx="219.8" cy="439.8" r="6.9" fill="#1677ff"/><circle cx="354.3" cy="439.8" r="6.9" fill="#1677ff"/><circle cx="488.8" cy="439.8" r="6.9" fill="#1677ff"/><circle cx="623.3" cy="439.8" r="6.9" fill="#1677ff"/><circle cx="757.8" cy="278.2" r="6.9" fill="#1677ff"/><circle cx="892.3" cy="228.6" r="6.9" fill="#1677ff"/></svg></div>
    <div class="card" style="left:488px;top:1126px;width:1041px;height:900px"><div class="ch-title">最近注册用户</div><div class="more" style="left:845px">查看全部</div><div class="ch-div"></div><div class="tbl"><div class="th" style="left:0;width:941px;height:76px;border-radius:16px 16px 0 0"></div><div class="rowb" style="top:76px"></div><div class="cell hd" style="left:16px;top:18px">用户名</div><div class="cell hd" style="left:184px;top:18px">邮箱</div><div class="cell hd" style="left:564px;top:18px">注册时间</div><div class="cell hd" style="left:767px;top:18px">操作</div><div class="sep" style="left:168px;top:16px"></div><div class="sep" style="left:548px;top:16px"></div><div class="sep" style="left:751px;top:16px"></div><div class="cell" style="left:16px;top:97px">sunqi</div><div class="cell" style="left:184px;top:97px"><span class="lat">sunqi@example.com</span></div><div class="cell" style="left:564px;top:97px"><span class="num">2025-10-20</span></div><div class="cell link" style="left:785px;top:99px">查看详情</div><div class="rowb" style="top:158px"></div><div class="cell" style="left:16px;top:179px">wangwu</div><div class="cell" style="left:184px;top:179px"><span class="lat">wangwu@example.com</span></div><div class="cell" style="left:564px;top:179px"><span class="num">2025-10-20</span></div><div class="cell link" style="left:785px;top:181px">查看详情</div><div class="rowb" style="top:240px"></div><div class="cell" style="left:16px;top:261px">zhaoliu</div><div class="cell" style="left:184px;top:261px"><span class="lat">zhaoliu@example.com</span></div><div class="cell" style="left:564px;top:261px"><span class="num">2025-10-20</span></div><div class="cell link" style="left:785px;top:263px">查看详情</div><div class="rowb" style="top:322px"></div><div class="cell" style="left:16px;top:343px">zhangsan</div><div class="cell" style="left:184px;top:343px"><span class="lat">zhangsan@example.com</span></div><div class="cell" style="left:564px;top:343px"><span class="num">2025-10-20</span></div><div class="cell link" style="left:785px;top:345px">查看详情</div><div class="rowb" style="top:404px"></div></div></div>
    <div class="card" style="left:1561px;top:1126px;width:1041px;height:900px"><div class="ch-title">最近订单</div><div class="more" style="left:845px">查看全部</div><div class="ch-div"></div><div class="tbl"><div class="th" style="left:0;width:941px;height:120px;border-radius:16px 16px 0 0"></div><div class="rowb" style="top:120px"></div><div class="cell hd" style="left:16px;top:40px">用户</div><div class="cell hd" style="left:171px;top:18px">订阅计<br>划</div><div class="cell hd" style="left:311px;top:40px">金额</div><div class="cell hd" style="left:452px;top:40px">状态</div><div class="cell hd" style="left:592px;top:40px">时间</div><div class="cell hd" style="left:781px;top:40px">操作</div><div class="sep" style="left:155px;top:38px"></div><div class="sep" style="left:295px;top:38px"></div><div class="sep" style="left:436px;top:38px"></div><div class="sep" style="left:576px;top:38px"></div><div class="sep" style="left:765px;top:38px"></div><div class="cell" style="left:16px;top:161px">lisi</div><div class="cell" style="left:171px;top:139px;-webkit-text-stroke:0.3px currentColor">标准会<br>员</div><div class="cell" style="left:311px;top:161px"><span class="num2">¥240.00</span></div><div class="cell" style="left:452px;top:161px;color:#52c41a;-webkit-text-stroke:0.3px currentColor">已完成</div><div class="cell" style="left:592px;top:161px"><span class="num">2025-10-20</span></div><div class="cell link" style="left:797px;top:163px">查看详情</div><div class="rowb" style="top:242px"></div><div class="cell" style="left:16px;top:283px">wangwu</div><div class="cell" style="left:171px;top:261px;-webkit-text-stroke:0.3px currentColor">标准会<br>员</div><div class="cell" style="left:311px;top:283px"><span class="num2">¥68.00</span></div><div class="cell" style="left:452px;top:261px;color:#ff4d4f;-webkit-text-stroke:0.3px currentColor">订单超<br>时</div><div class="cell" style="left:592px;top:283px"><span class="num">2025-10-20</span></div><div class="cell link" style="left:797px;top:285px">查看详情</div><div class="rowb" style="top:364px"></div></div></div>
    <div id="hdr">
      <svg class="abs" style="left:73px;top:51px" width="30" height="27" viewBox="0 0 30 27">
        <rect x="0" y="0" width="29" height="3" fill="#111"/>
        <rect x="12" y="8" width="17" height="3" fill="#111"/>
        <rect x="12" y="16" width="17" height="3" fill="#111"/>
        <rect x="0" y="23.5" width="29" height="3" fill="#111"/>
        <polygon points="0,13.5 8,8.5 8,18.5" fill="#111"/>
      </svg>
      <div class="abs" style="left:160px;top:43.5px;height:44px;line-height:44px;font-size:28px;color:#6b7280;-webkit-text-stroke:0.35px currentColor">管理后台</div>
      <div class="abs" style="left:2001px;top:32px;width:64px;height:64px;border-radius:50%;background:#bfbfbf"></div>
      <svg class="abs" style="left:2001px;top:32px" width="64" height="64" viewBox="0 0 64 64" fill="none" stroke="#fff" stroke-width="3.4">
        <circle cx="32" cy="24" r="7.2"/>
        <path d="M17.5 48 A14.5 14.5 0 0 1 46.5 48"/>
      </svg>
      <div class="abs" style="left:2081px;top:42px;height:44px;line-height:44px;font-size:28px;color:#1f1f1f;letter-spacing:1px;-webkit-text-stroke:0.5px currentColor">admin</div>
    </div>
  </div>
</div>
</body>
</html>
